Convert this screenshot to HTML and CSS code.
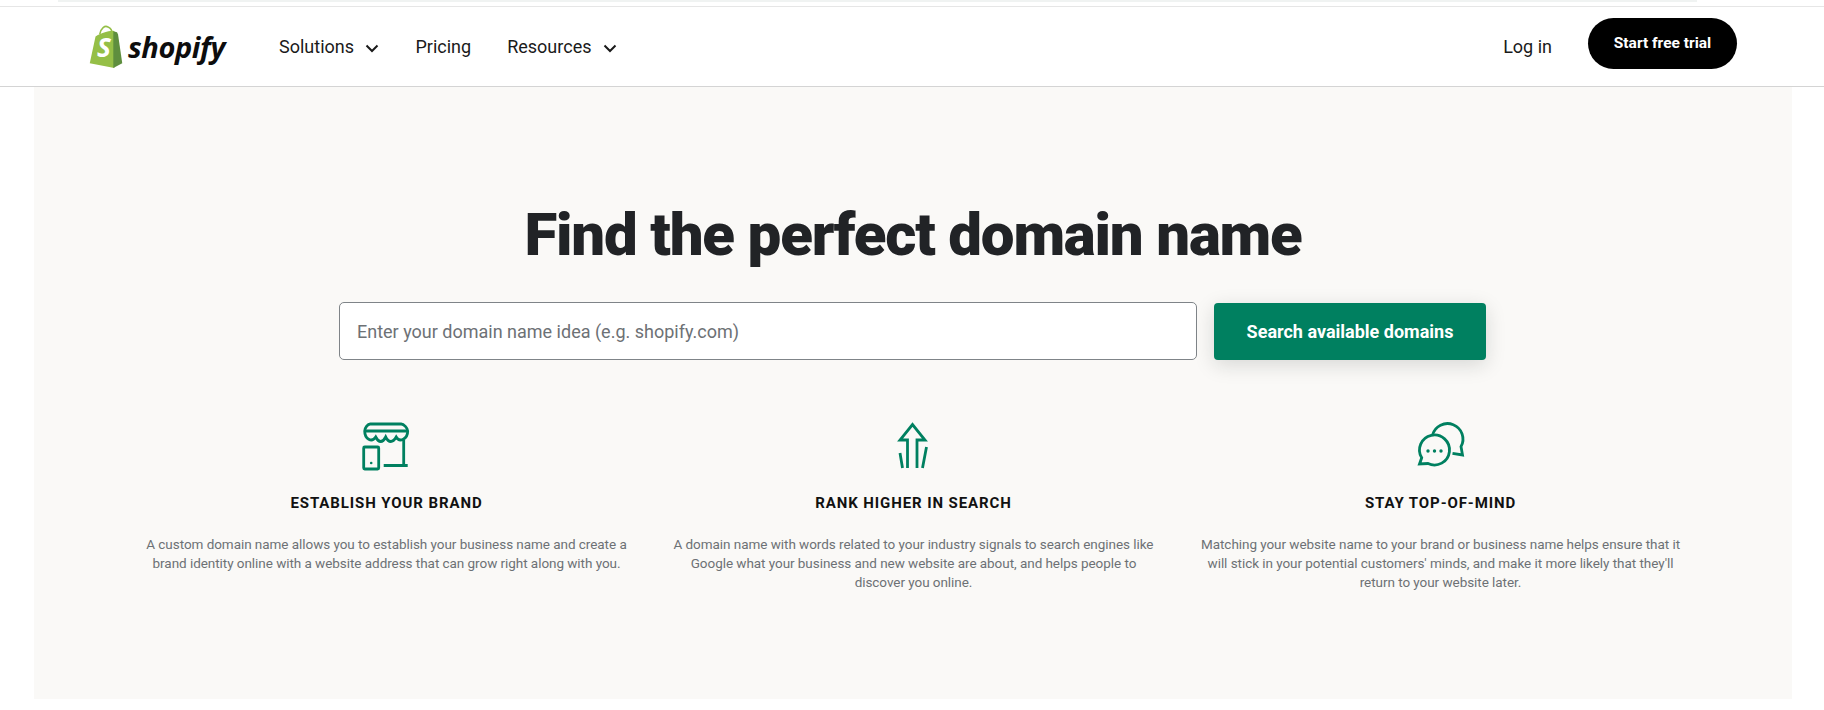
FILE: index.html
```html
<!DOCTYPE html>
<html lang="en">

<head>
    <meta charset="UTF-8">
    <meta name="viewport" content="width=device-width, initial-scale=1.0">
    <title>Domain Name Search</title>
    <link rel="stylesheet" href="styles.css">
</head>

<body>
    <div class="top-strip">
        <div class="top-strip-inner"></div>
    </div>
    <div class="header">
        <a class="logo" href="#">
            <svg class="logo-bag" viewBox="0 0 36 42" width="38" height="44">
                <path d="M12 9 C13 3 17 0 20 2 C23 3 24 6 24 10" fill="none" stroke="#95bf47" stroke-width="1.5" />
                <path d="M8 11 C11 9 14 8 17 7 C20 6 24 5 26 6 L26 41 L2.500 36.500 Z" fill="#95bf47" />
                <path d="M25 6 L28.500 7 L29.500 9 L33.500 36.500 L25 41 Z" fill="#5e8e3e" />
                <text class="logo-s" x="9.500" y="31">S</text>
            </svg>
            <span class="logo-text">shopify</span>
        </a>
        <div class="nav">
            <a href="#">Solutions
                <svg class="chevron" viewBox="0 0 14 9" width="14" height="9"><path d="M1.500 1.500 L7 7 L12.500 1.500" /></svg>
            </a>
            <a href="#">Pricing</a>
            <a href="#">Resources
                <svg class="chevron" viewBox="0 0 14 9" width="14" height="9"><path d="M1.500 1.500 L7 7 L12.500 1.500" /></svg>
            </a>
        </div>
        <div class="header-right">
            <a class="login" href="#">Log in</a>
            <a class="trial-btn" href="#">Start free trial</a>
        </div>
    </div>
    <div class="panel">
        <h1>Find the perfect domain name</h1>
        <form class="search">
            <input type="text" class="search-input" placeholder="Enter your domain name idea (e.g. shopify.com)">
            <button type="button" class="search-btn">Search available domains</button>
        </form>
        <div class="features">
            <div class="feature">
                <svg class="feature-icon" viewBox="2.300 0 60 60" width="60" height="60">
                    <path d="M15.500 9 H46.500 C49 9 53 13 53 16 C53 24 45 28 41.500 22 C38 28 34 28 31 22 C28 28 24 28 21 22 C17 28 10 24 10 16 C10 13 13 9 15.500 9 Z" />
                    <path d="M10 16 H53" />
                    <path d="M49 25 V50.500 M29 50.500 H53" />
                    <rect x="9" y="32" width="15" height="22" rx="1" />
                    <circle class="dot" cx="16.500" cy="48" r="1.300" />
                </svg>
                <h3>ESTABLISH YOUR BRAND</h3>
                <p>A custom domain name allows you to establish your business name and create a brand identity online with a website address that can grow right along with you.</p>
            </div>
            <div class="feature">
                <svg class="feature-icon" viewBox="1.500 0 60 60" width="60" height="60">
                    <path d="M25 53 V25 H17.500 L30 9.500 L42.500 25 H34.500 V53" />
                    <path d="M17.500 38 L20 53 M44 32 L40 53" />
                </svg>
                <h3>RANK HIGHER IN SEARCH</h3>
                <p>A domain name with words related to your industry signals to search engines like Google what your business and new website are about, and helps people to discover you online.</p>
            </div>
            <div class="feature">
                <svg class="feature-icon" viewBox="0.500 0 60 60" width="60" height="60">
                    <path d="M9 49 L11.200 42.800 A15 15 0 1 1 17.500 48.500 Z" />
                    <path d="M22 20 A15.500 15.500 0 1 1 50.500 31.600 L52 40 L42 38.300" />
                    <circle class="dot" cx="17.500" cy="36" r="1.700" />
                    <circle class="dot" cx="24" cy="36" r="1.700" />
                    <circle class="dot" cx="30.500" cy="36" r="1.700" />
                </svg>
                <h3>STAY TOP-OF-MIND</h3>
                <p>Matching your website name to your brand or business name helps ensure that it will stick in your potential customers' minds, and make it more likely that they'll return to your website later.</p>
            </div>
        </div>
    </div>
</body>

</html>
```

FILE: styles.css
```css
body {
    font-family: Roboto, Arial, sans-serif;
    background-color: white;
    color: #212326;
    margin: 0;
    height: 710px;
    overflow: hidden;
}

a {
    color: inherit;
    text-decoration: none;
}

.top-strip {
    height: 7px;
    box-sizing: border-box;
    border-bottom: 1px solid #e6e6e6;
}

.top-strip-inner {
    height: 2px;
    margin: 0 127px 0 58px;
    background-color: #f0f3f2;
}

.header {
    display: flex;
    align-items: center;
    box-sizing: border-box;
    height: 80px;
    padding: 0 87px 0 87px;
    border-bottom: 1px solid #d4d4d4;
}

.logo {
    display: flex;
    align-items: center;
    gap: 3px;
    width: 192px;
    color: #0d0d0d;
}

.logo-s {
    font-family: "Open Sans", Arial, sans-serif;
    font-size: 25px;
    font-weight: 700;
    font-style: italic;
    fill: white;
}

.logo-text {
    font-family: "Open Sans", Arial, sans-serif;
    font-size: 29px;
    font-weight: 700;
    font-style: italic;
    letter-spacing: -0.400px;
}

.nav {
    display: flex;
    align-items: center;
    gap: 36px;
    font-size: 18px;
    color: #1a1a1a;
}

.chevron {
    margin-left: 7px;
}

.chevron path {
    fill: none;
    stroke: #1a1a1a;
    stroke-width: 2;
}

.header-right {
    display: flex;
    align-items: center;
    gap: 36px;
    margin-left: auto;
}

.login {
    font-size: 18px;
    color: #1a1a1a;
}

.trial-btn {
    display: flex;
    justify-content: center;
    padding: 16px 0 0;
    box-sizing: border-box;
    width: 149px;
    height: 51px;
    margin-top: -6px;
    border-radius: 26px;
    background-color: black;
    color: white;
    font-size: 15.500px;
    font-weight: 700;
}

.panel {
    box-sizing: border-box;
    width: 1758px;
    height: 612px;
    margin-left: 34px;
    padding-top: 108px;
    background-color: #faf9f7;
}

h1 {
    margin: 0;
    font-size: 60px;
    font-weight: 900;
    line-height: 80px;
    letter-spacing: -1.200px;
    text-align: center;
}

.search {
    display: flex;
    gap: 17px;
    margin: 27px 0 0 305px;
}

.search-input {
    box-sizing: border-box;
    width: 858px;
    height: 58px;
    padding: 0 17px;
    border: 1px solid #7f8488;
    border-radius: 5px;
    background-color: white;
    font-family: Roboto, Arial, sans-serif;
    font-size: 18px;
}

.search-input::placeholder {
    color: #6d7175;
}

.search-btn {
    width: 272px;
    height: 57px;
    margin-top: 1px;
    border: none;
    border-radius: 4px;
    background-color: #008060;
    color: white;
    font-family: Roboto, Arial, sans-serif;
    font-size: 18px;
    font-weight: 700;
    box-shadow: 0 5px 20px rgba(23, 24, 24, 0.15);
}

.features {
    display: grid;
    grid-template-columns: repeat(3, 495px);
    gap: 32px;
    margin: 55px 0 0 105px;
}

.feature {
    display: flex;
    flex-direction: column;
    align-items: center;
    text-align: center;
}

.feature-icon path,
.feature-icon rect {
    fill: none;
    stroke: #008060;
    stroke-width: 2.800;
}

.feature-icon .dot {
    fill: #008060;
}

.feature h3 {
    margin: 18px 0 0;
    font-size: 15px;
    font-weight: 700;
    line-height: 20px;
    letter-spacing: 0.900px;
    color: #111;
}

.feature p {
    margin: 22px 0 0;
    font-size: 13.500px;
    line-height: 19px;
    letter-spacing: -0.050px;
    color: #6d7175;
}
```
